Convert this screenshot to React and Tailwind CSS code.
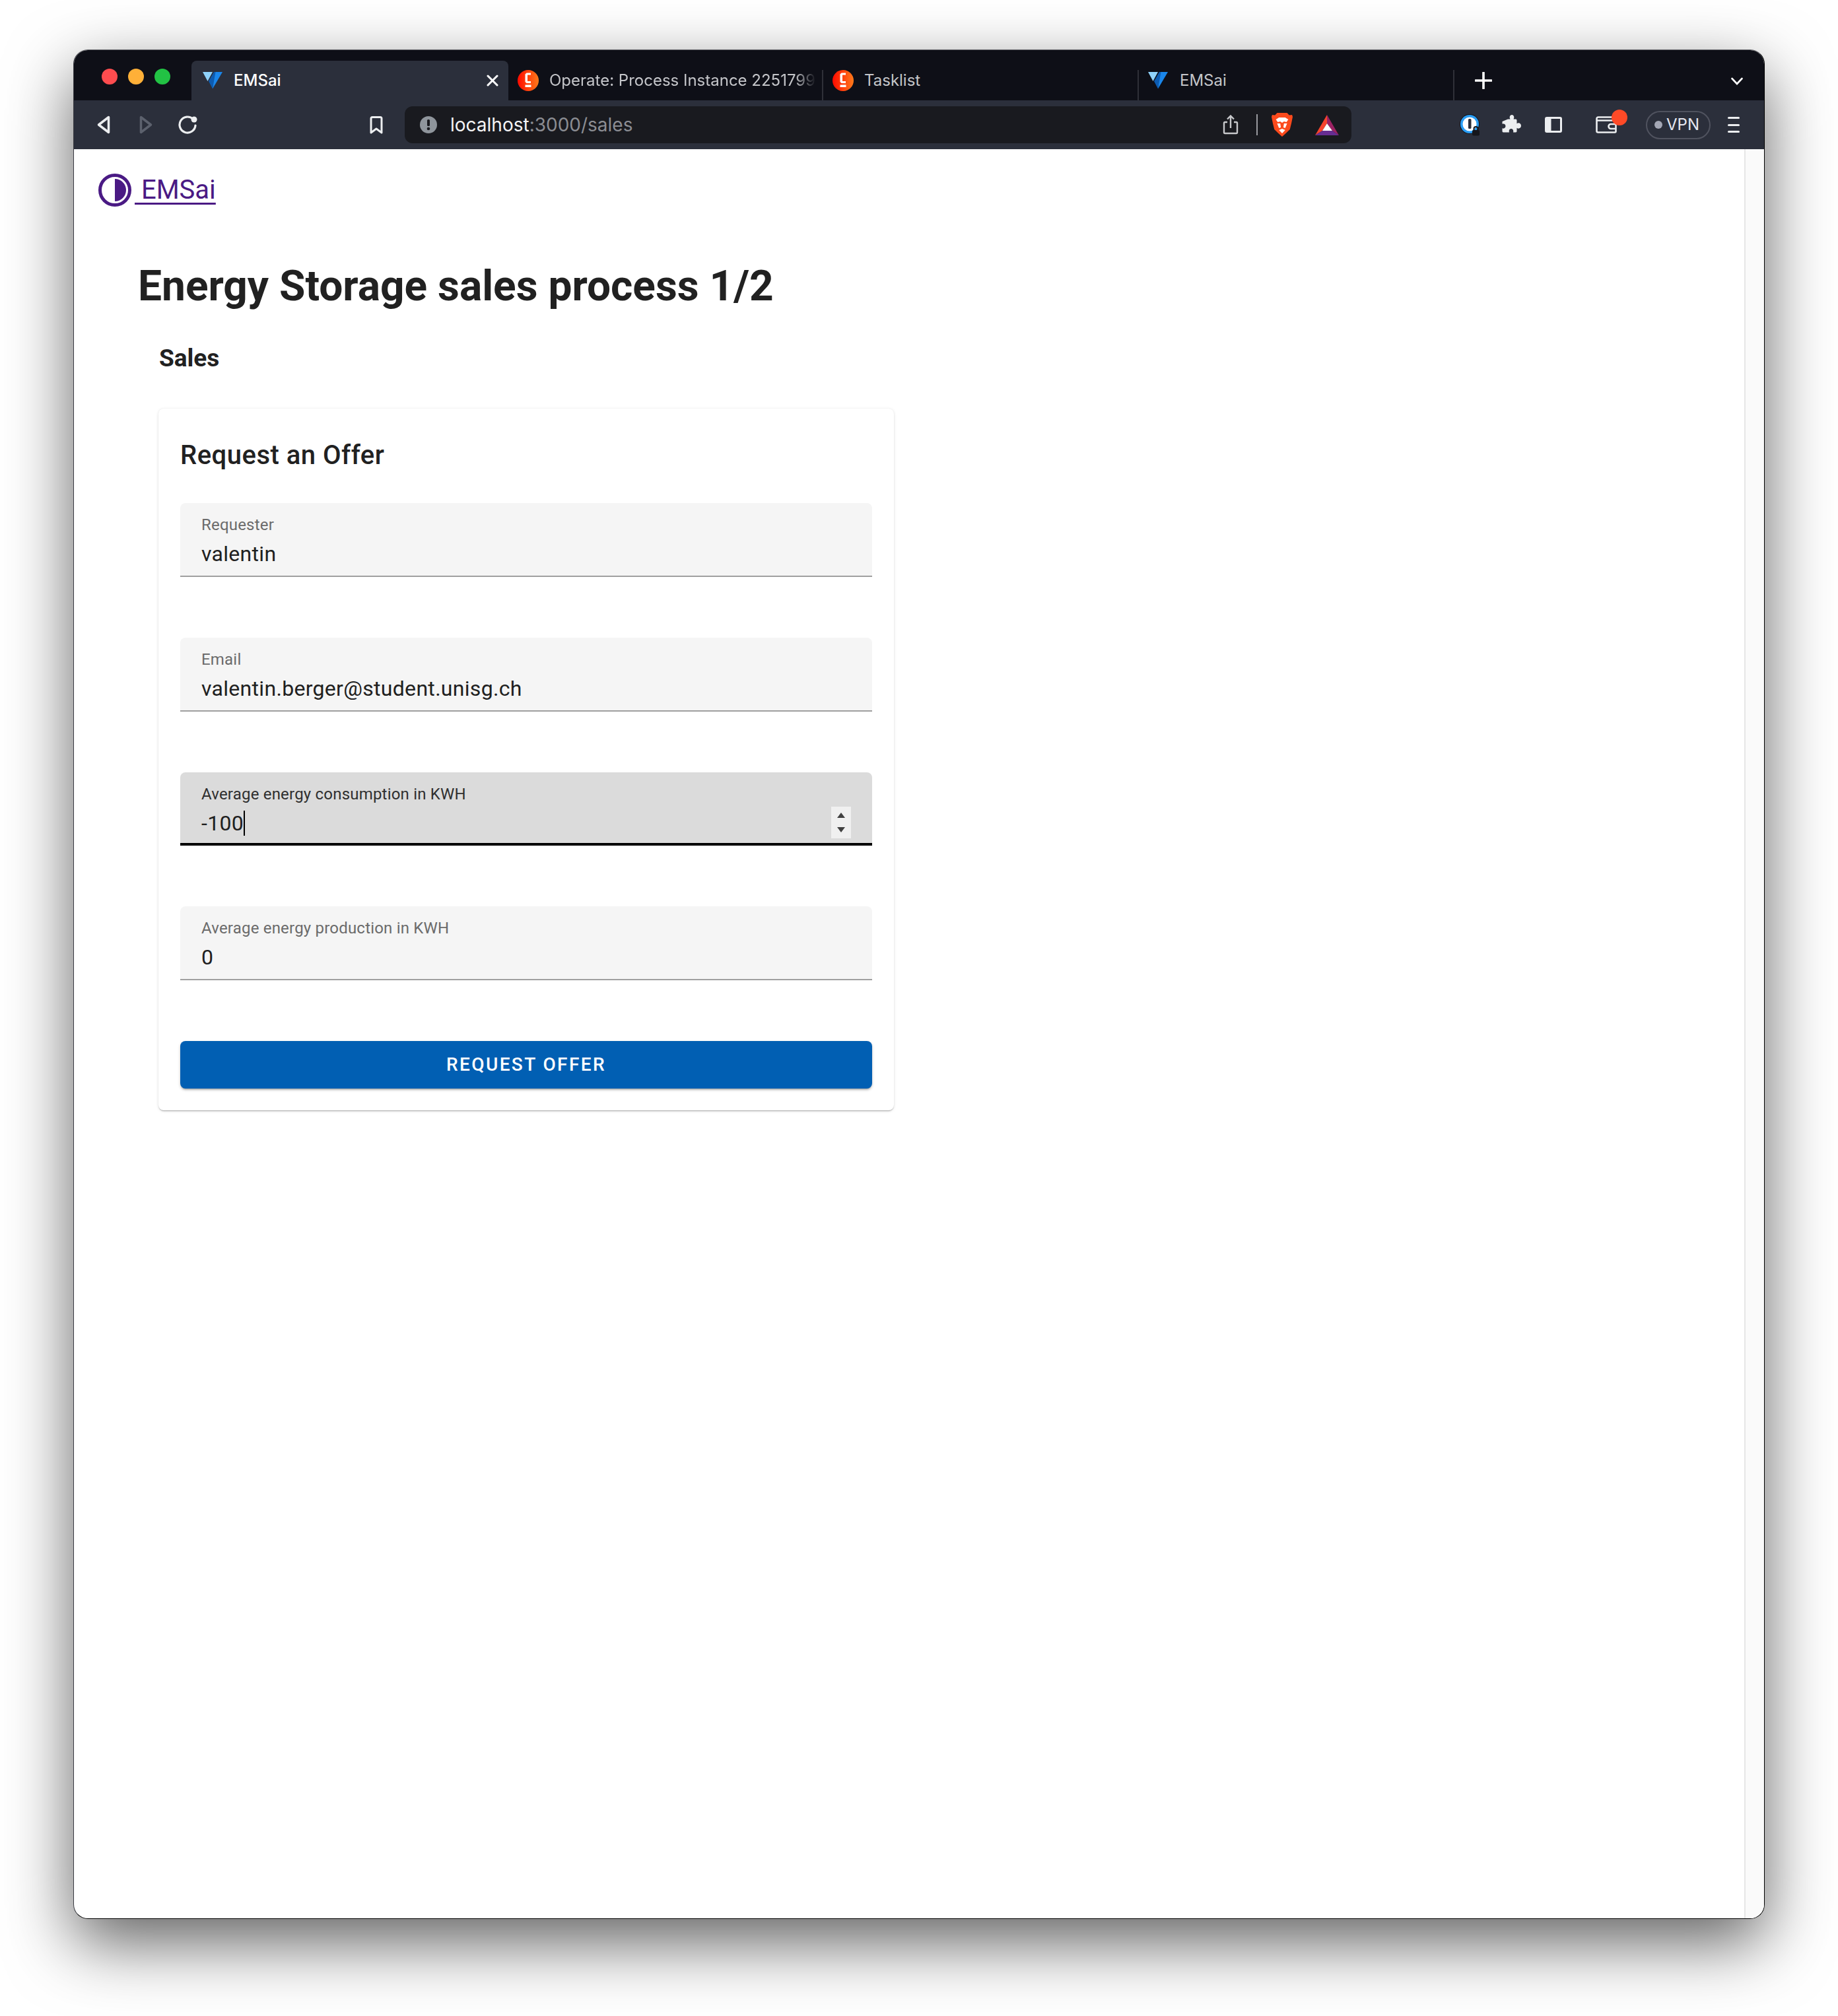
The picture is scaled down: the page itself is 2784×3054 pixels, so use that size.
const ui = "font-['Inter','Liberation_Sans',sans-serif]";
const rb = "font-['Roboto','Liberation_Sans',sans-serif]";

function Vuetify() {
  return (
    <svg width="30" height="26" viewBox="0 0 30 26" className="shrink-0">
      <path d="M0 0h15L7.500 14z" fill="#8fd2fb" />
      <path d="M17 0h13L15 25.500z" fill="#1a86ea" />
      <path d="M17 0h2.500L15 25.500 9 14z" fill="#0d5bb0" />
    </svg>
  );
}

function Camunda() {
  return (
    <svg width="32" height="32" viewBox="0 0 32 32" className="shrink-0">
      <defs>
        <linearGradient id="cam" x1="0" x2="1" y1="0" y2="0">
          <stop offset="0" stopColor="#ff0a00" />
          <stop offset="1" stopColor="#ff7a1a" />
        </linearGradient>
      </defs>
      <circle cx="16" cy="16" r="16" fill="url(#cam)" />
      <path d="M20 4.500h-6.500L11.500 6.500v11.500l2 2H20v-3h-5v-9.500h5z" fill="#fff" />
      <rect x="11.500" y="22.500" width="9" height="3.500" fill="#fff" />
    </svg>
  );
}

function Tab({ w, title, icon, fade, active, pad, gap }) {
  return (
    <div className={`${w} flex items-center h-[60px] shrink-0 relative ${active ? "bg-[#2b2f3b] rounded-t-lg" : ""}`}>
      <div className={`flex items-center ${pad} overflow-hidden`}>
        {icon}
      </div>
      <span
        className={`${ui} text-[24px] whitespace-nowrap overflow-hidden ${gap} ${active ? "text-white font-medium" : "text-[#c4c5c9]"} ${fade ? "w-[404px] [mask-image:linear-gradient(to_right,black_92%,transparent)]" : ""}`}
      >
        {title}
      </span>
      {active && (
        <svg width="18" height="18" viewBox="0 0 18 18" className="absolute right-[15px] top-[21px]">
          <path d="M2 2l14 14M16 2L2 16" stroke="#fff" strokeWidth="3" strokeLinecap="round" />
        </svg>
      )}
    </div>
  );
}

const Sep = () => <div className="w-[2px] h-[46px] self-end bg-[#2f3038] shrink-0" />;

function Field({ label, value, focused, caret, spinner }) {
  return (
    <div
      className={`relative h-[112px] rounded-t-lg flex flex-col pl-[32px] pt-[19px] ${focused ? "bg-[#dbdbdb] border-b-4 border-black" : "bg-[#f5f5f5] border-b-2 border-[#9f9f9f]"}`}
    >
      <div className={`text-[24px] leading-[28px] tracking-[0.2px] ${focused ? "text-[#2f2f2f]" : "text-[#6b6b6b]"}`}>{label}</div>
      <div className="text-[32px] leading-[38px] mt-[11px] tracking-[0.3px] text-[#202020] flex items-center">
        {value}
        {caret && <span className="w-[2px] h-[38px] bg-black" />}
      </div>
      {spinner && (
        <div className="absolute right-[32px] top-[52px] w-[30px] h-[48px] bg-[#f0f0f0] flex flex-col items-center justify-between py-[8px]">
          <svg width="14" height="10" viewBox="0 0 14 10"><path d="M7 1l6 8H1z" fill="#404040" /></svg>
          <svg width="14" height="10" viewBox="0 0 14 10"><path d="M1 1h12L7 9z" fill="#404040" /></svg>
        </div>
      )}
    </div>
  );
}

function Toolbar() {
  return (
    <div className="h-[74px] bg-[#2b2f3b] flex items-center shrink-0">
      <svg width="20" height="28" viewBox="0 0 20 28" className="ml-[35px] shrink-0">
        <path d="M17.5 2.5L2.5 14l15 11.500z" fill="none" stroke="#eceef0" strokeWidth="3.500" strokeLinejoin="round" />
      </svg>
      <svg width="20" height="28" viewBox="0 0 20 28" className="ml-[44px] shrink-0">
        <path d="M2.500 2.500L17.500 14l-15 11.500z" fill="none" stroke="#5c616d" strokeWidth="3.500" strokeLinejoin="round" />
      </svg>
      <svg width="30" height="28" viewBox="0 0 30 28" className="ml-[39px] shrink-0">
        <path d="M22.500 5.500A12 12 0 1 0 26 15" fill="none" stroke="#eceef0" strokeWidth="3.200" strokeLinecap="round" />
        <circle cx="24" cy="6" r="4.500" fill="#eceef0" />
      </svg>
      <svg width="20" height="27" viewBox="0 0 20 27" className="ml-[260px] shrink-0">
        <path d="M2 3.500Q2 1.500 4 1.500h12q2 0 2 2v21.500l-8-6-8 6z" fill="none" stroke="#eceef0" strokeWidth="3" strokeLinejoin="round" />
      </svg>
      <div className="ml-[33px] w-[1434px] h-[56px] rounded-xl bg-[#191a1f] flex items-center shrink-0">
        <svg width="26" height="26" viewBox="0 0 26 26" className="ml-[23px] shrink-0">
          <circle cx="13" cy="13" r="13" fill="#8f959c" />
          <rect x="11" y="5" width="4" height="10" rx="1.500" fill="#191a1f" />
          <circle cx="13" cy="19" r="2.300" fill="#191a1f" />
        </svg>
        <div className={`${ui} ml-[20px] text-[28px] whitespace-nowrap w-[1170px] text-[#f4f4f5]`}>
          localhost<span className="text-[#8b8d93]">:3000/sales</span>
        </div>
        <svg width="24" height="30" viewBox="0 0 24 30" className="shrink-0">
          <path d="M7 11H3.500Q2 11 2 12.500V26.500Q2 28 3.500 28h17q1.500 0 1.500-1.500V12.500Q22 11 20.500 11H17" fill="none" stroke="#c7c8cb" strokeWidth="2.400" />
          <path d="M12 20V2M7 6.500L12 1.500l5 5" fill="none" stroke="#c7c8cb" strokeWidth="2.400" />
        </svg>
        <div className="ml-[27px] w-[2px] h-[32px] bg-[#9a9ba0] shrink-0" />
        <svg width="32" height="36" viewBox="0 0 34 36" className="ml-[21px] shrink-0" preserveAspectRatio="none">
          <path d="M9 0h16l3.500 3.500L33 3l1 3-2 9.500-2.500 9.500-6 5.500L17 36l-6.500-5.500-6-5.500L2 15.500 0 6l1-3 4.500.5z" fill="#fb4a1c" />
          <path d="M7 10l5-3h10l5 3-3 4-4-1-3 2-3-2-4 1zM9 16h5l1 6-3 1zM25 16h-5l-1 6 3 1zM12 26l5-2 5 2-5 5z" fill="#fff" />
        </svg>
        <svg width="36" height="31" viewBox="0 0 36 31" className="ml-[34px] shrink-0">
          <path d="M18 0L0 31l11-7 7-11z" fill="#f6432c" />
          <path d="M18 0L36 31l-10-7-8-11z" fill="#9c2263" />
          <path d="M0 31h36l-10-7H11z" fill="#662d91" />
          <path d="M18 13l-7 11h15z" fill="#fff" />
        </svg>
      </div>
      <svg width="32" height="33" viewBox="0 0 32 33" className="ml-[164px] shrink-0">
        <circle cx="15" cy="15" r="15" fill="#111218" />
        <circle cx="15" cy="15" r="14" fill="#2a9df4" />
        <circle cx="15" cy="15" r="10.500" fill="#fff" />
        <rect x="13" y="7" width="4.500" height="15" rx="1.500" fill="#2b2f3b" />
        <rect x="19" y="24" width="11" height="8.500" rx="2" fill="#15161b" />
        <path d="M21.500 24v-2a3 3 0 0 1 6 0v2" fill="none" stroke="#15161b" strokeWidth="2" />
      </svg>
      <svg width="30" height="30" viewBox="0 0 30 30" className="ml-[32px] shrink-0">
        <path d="M10 6h3.500c-2-3 0-6 2.500-6s4.500 3 2.500 6H22q1.500 0 1.500 1.500v4.500c3-2 6.500 0 6.500 3s-3.500 5-6.500 3v4.500q0 1.500-1.500 1.500h-4c1-3-1-5-3-5s-4 2-3 5H3q-1.500 0-1.500-1.500v-4c3 1 5-1 5-3s-2-4-5-3V9z" transform="translate(-1 0) scale(1 1.100)" fill="#eceef0" />
      </svg>
      <svg width="26" height="24" viewBox="0 0 26 24" className="ml-[35px] shrink-0">
        <rect x="1.500" y="1.500" width="23" height="21" rx="1.500" fill="none" stroke="#eceef0" strokeWidth="3" />
        <rect x="1.500" y="1.500" width="8" height="21" fill="#eceef0" />
      </svg>
      <div className="relative ml-[51px] w-[32px] h-[26px] shrink-0">
        <svg width="32" height="26" viewBox="0 0 32 26" className="block">
          <path d="M30.500 6V3Q30.500 1.500 29 1.500H4Q1.500 1.500 1.500 4v18.500q0 2 2 2h25.500q1.500 0 1.500-1.500V8q0-1.500-1.500-1.500H2" fill="none" stroke="#eceef0" strokeWidth="2.600" />
          <path d="M30 12h-7a3.500 3.500 0 0 0 0 7h7" fill="none" stroke="#eceef0" strokeWidth="2.600" />
        </svg>
        <span className="absolute left-[24px] top-[-10px] w-[24px] h-[24px] rounded-full bg-[#ff4a27]" />
      </div>
      <div className={`${ui} ml-[44px] w-[98px] h-[43px] rounded-full border-2 border-[#50535f] flex items-center text-[24px] text-[#e5e7f0] shrink-0`}>
        <span className="ml-[11px] w-[12px] h-[12px] rounded-full bg-[#a4a7b5]" />
        <span className="ml-[6px]">VPN</span>
      </div>
      <div className="ml-[26px] w-[18px] h-[24px] flex flex-col justify-between shrink-0">
        <span className="block h-[3px] bg-[#eceef0] rounded-sm" />
        <span className="block h-[3px] bg-[#eceef0] rounded-sm" />
        <span className="block h-[3px] bg-[#eceef0] rounded-sm" />
      </div>
    </div>
  );
}

export default function App() {
  return (
    <div className="w-[2784px] h-[3054px] bg-white pl-[111px] pt-[75px] overflow-hidden">
      <div className="w-[2562px] h-[2832px] rounded-[22px] overflow-hidden flex flex-col bg-white shadow-[0_36px_100px_rgba(0,0,0,0.62)] border border-black border-t-[#55565c] border-l-[#3a3b42]">
        <div className="h-[76px] bg-[#0e0f17] flex items-end pl-[178px] shrink-0 relative">
          <div className="absolute left-[42px] top-[28px] flex gap-[16px]">
            <span className="w-[24px] h-[24px] rounded-full bg-[#fd4c4f]" />
            <span className="w-[24px] h-[24px] rounded-full bg-[#ffb038]" />
            <span className="w-[24px] h-[24px] rounded-full bg-[#22c244]" />
          </div>
          <Tab w="w-[480px]" active pad="pl-[17px]" gap="ml-[17px]" icon={<Vuetify />} title="EMSai" />
          <Tab w="w-[475px]" fade pad="pl-[14px]" gap="ml-[16px]" icon={<Camunda />} title="Operate: Process Instance 2251799" />
          <Sep />
          <Tab w="w-[476px]" pad="pl-[14px]" gap="ml-[16px]" icon={<Camunda />} title="Tasklist" />
          <Sep />
          <Tab w="w-[476px]" pad="pl-[14px]" gap="ml-[18px]" icon={<Vuetify />} title="EMSai" />
          <Sep />
          <svg width="26" height="26" viewBox="0 0 26 26" className="ml-[31px] mb-[17px] shrink-0">
            <path d="M13 1v24M1 13h24" stroke="#fff" strokeWidth="3.600" strokeLinecap="round" />
          </svg>
          <svg width="18" height="12" viewBox="0 0 18 12" className="ml-[362px] mb-[23px] shrink-0">
            <path d="M1.500 2L9 10l7.500-8" fill="none" stroke="#fff" strokeWidth="2.600" strokeLinecap="round" />
          </svg>
        </div>
        <Toolbar />
        <div className={`${rb} flex-1 flex min-h-0`}>
          <div className="flex-1 pt-[37px]">
            <a className="ml-[37px] flex items-center text-[#4a1a84] text-[40px] leading-[50px] w-fit">
              <svg width="50" height="50" viewBox="0 0 50 50" className="shrink-0">
                <circle cx="25" cy="25" r="22.500" fill="none" stroke="#4a1a84" strokeWidth="5" />
                <path d="M25 8a17 17 0 0 1 0 34z" fill="#4a1a84" />
              </svg>
              <span className="ml-[5px] underline underline-offset-[6px] decoration-[3px] whitespace-pre font-normal"> EMSai</span>
            </a>
            <h1 className="ml-[97px] mt-[81px] text-[64px] leading-[80px] font-bold text-[#212121]">Energy Storage sales process 1/2</h1>
            <h2 className="ml-[129px] mt-[45px] text-[37px] leading-[48px] font-bold text-[#212121]">Sales</h2>
            <div className="ml-[128px] mt-[52px] w-[1114px] h-[1063px] bg-white rounded-lg p-[33px] flex flex-col gap-[92px] shadow-[0_2px_2px_-1px_rgba(0,0,0,0.3),0_1px_5px_rgba(0,0,0,0.1),0_0_2px_rgba(0,0,0,0.06)]">
              <div className="-mb-[92px]">
                <h3 className="mt-[18px] text-[40px] leading-[40px] font-medium text-[#212121] tracking-[0.5px] h-[92px]">Request an Offer</h3>
              </div>
              <Field label="Requester" value="valentin" />
              <Field label="Email" value="valentin.berger@student.unisg.ch" />
              <Field label="Average energy consumption in KWH" value="-100" focused caret spinner />
              <Field label="Average energy production in KWH" value="0" />
              <button className="h-[72px] rounded-lg bg-[#015fb3] text-white text-[28px] font-medium tracking-[2.400px] shadow-[0_3px_3px_-2px_rgba(0,0,0,0.3),0_2px_4px_rgba(0,0,0,0.2)]">
                REQUEST OFFER
              </button>
            </div>
          </div>
          <div className="w-[30px] shrink-0 bg-[#fafafa] border-l-2 border-[#e6e6e6]" />
        </div>
      </div>
    </div>
  );
}
